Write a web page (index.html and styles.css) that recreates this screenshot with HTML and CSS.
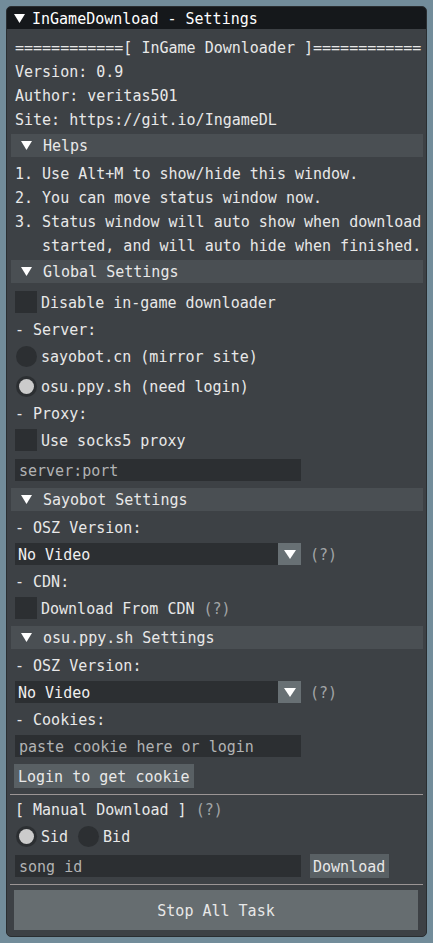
FILE: index.html
```html
<!DOCTYPE html>
<html>
<head>
<meta charset="utf-8">
<link rel="stylesheet" href="styles.css">
</head>
<body>
<div class="win">
  <div class="title">
    <svg class="tri-title" width="11" height="9" viewBox="0 0 11 9"><path d="M0 0H11L5.5 9Z" fill="#ffffff"/></svg>
    <span class="title-text">InGameDownload - Settings</span>
  </div>
  <div class="content">
    <div class="t">============[ InGame Downloader ]============</div>
    <div class="t">Version: 0.9</div>
    <div class="t">Author: veritas501</div>
    <div class="t">Site: https://git.io/IngameDL</div>

    <div class="hdr"><svg class="tri" width="11" height="9" viewBox="0 0 11 9"><path d="M0 0H11L5.5 9Z" fill="#ffffff"/></svg><span>Helps</span></div>
    <div class="t">1. Use Alt+M to show/hide this window.</div>
    <div class="t">2. You can move status window now.</div>
    <div class="t">3. Status window will auto show when download</div>
    <div class="t">   started, and will auto hide when finished.</div>

    <div class="hdr"><svg class="tri" width="11" height="9" viewBox="0 0 11 9"><path d="M0 0H11L5.5 9Z" fill="#ffffff"/></svg><span>Global Settings</span></div>
    <div class="row"><div class="box"></div><span class="lbl">Disable in-game downloader</span></div>
    <div class="t">- Server:</div>
    <div class="row"><div class="radio"></div><span class="lbl">sayobot.cn (mirror site)</span></div>
    <div class="row"><div class="radio on"></div><span class="lbl">osu.ppy.sh (need login)</span></div>
    <div class="t">- Proxy:</div>
    <div class="row"><div class="box"></div><span class="lbl">Use socks5 proxy</span></div>
    <div class="row"><div class="inp">server:port</div></div>

    <div class="hdr"><svg class="tri" width="11" height="9" viewBox="0 0 11 9"><path d="M0 0H11L5.5 9Z" fill="#ffffff"/></svg><span>Sayobot Settings</span></div>
    <div class="t">- OSZ Version:</div>
    <div class="row">
      <div class="combo"><span class="combo-val">No Video</span><span class="combo-btn"><svg width="12" height="9" viewBox="0 0 12 9"><path d="M0 0H12L6 9Z" fill="#ffffff"/></svg></span></div>
      <span class="help gapped">(?)</span>
    </div>
    <div class="t">- CDN:</div>
    <div class="row"><div class="box"></div><span class="lbl">Download From CDN <span class="help">(?)</span></span></div>

    <div class="hdr"><svg class="tri" width="11" height="9" viewBox="0 0 11 9"><path d="M0 0H11L5.5 9Z" fill="#ffffff"/></svg><span>osu.ppy.sh Settings</span></div>
    <div class="t">- OSZ Version:</div>
    <div class="row">
      <div class="combo"><span class="combo-val">No Video</span><span class="combo-btn"><svg width="12" height="9" viewBox="0 0 12 9"><path d="M0 0H12L6 9Z" fill="#ffffff"/></svg></span></div>
      <span class="help gapped">(?)</span>
    </div>
    <div class="t">- Cookies:</div>
    <div class="row"><div class="inp">paste cookie here or login</div></div>
    <div class="row"><div class="btn">Login to get cookie</div></div>

    <div class="sep"></div>
    <div class="t">[ Manual Download ] <span class="help">(?)</span></div>
    <div class="row">
      <div class="radio on"></div><span class="lbl">Sid</span>
      <div class="radio second"></div><span class="lbl">Bid</span>
    </div>
    <div class="row"><div class="inp">song id</div><div class="btn dl">Download</div></div>
    <div class="sep"></div>
    <div class="stop">Stop All Task</div>
  </div>
</div>
</body>
</html>
```

FILE: styles.css
```css
html, body {
  margin: 0;
  padding: 0;
}
body {
  background: #728c9a;
  font-family: "DejaVu Sans Mono", "Liberation Mono", monospace;
  font-size: 15px;
  color: #e8e8e8;
  width: 433px;
  height: 943px;
  overflow: hidden;
}
.win {
  margin: 6px 0 0 6px;
  width: 421px;
  box-sizing: border-box;
  border: 1px solid #2a2e31;
  border-radius: 5px;
  background: #3d4145;
  overflow: hidden;
}
.title {
  height: 22px;
  background: #15181b;
  display: flex;
  align-items: flex-start;
  color: #ffffff;
}
.tri-title {
  margin: 7px 0 0 7px;
  flex: none;
}
.title-text {
  margin-left: 7px;
  line-height: 24px;
  white-space: pre;
}
.content {
  padding: 10px 9px 7px 8px;
  display: flex;
  flex-direction: column;
  gap: 8px;
}
.t {
  height: 16px;
  line-height: 18px;
  white-space: pre;
}
.hdr {
  height: 23px;
  margin: -1px -6px 0 -4px;
  background: #4a4f53;
  display: flex;
  align-items: flex-start;
  white-space: pre;
}
.hdr span {
  line-height: 25px;
}
.hdr .tri {
  margin: 7px 11px 0 10px;
  flex: none;
}
.row {
  height: 22px;
  display: flex;
  align-items: flex-start;
  white-space: pre;
}
.box {
  width: 22px;
  height: 22px;
  background: #2c2f32;
  flex: none;
}
.lbl {
  margin-left: 4px;
  line-height: 24px;
}
.radio {
  width: 21px;
  height: 21px;
  margin: 0.5px 0 0 1px;
  border-radius: 50%;
  background: #2c2f32;
  flex: none;
  position: relative;
}
.radio.on::after {
  content: "";
  position: absolute;
  left: 3px;
  top: 3px;
  width: 15px;
  height: 15px;
  border-radius: 50%;
  background: #cbcbcb;
}
.radio.second {
  margin-left: 10px;
}
.inp {
  width: 282px;
  height: 22px;
  padding-left: 4px;
  line-height: 24px;
  background: #2c2f32;
  color: #b2b3b4;
  flex: none;
  overflow: hidden;
}
.combo {
  width: 286px;
  height: 22px;
  display: flex;
  background: #2c2f32;
  flex: none;
}
.combo-val {
  flex: 1;
  padding-left: 3px;
  line-height: 24px;
  color: #f0f0f0;
}
.combo-btn {
  width: 23px;
  height: 22px;
  background: #687074;
  display: flex;
  align-items: center;
  justify-content: center;
}
.help {
  color: #a2a5a7;
}
.help.gapped {
  margin-left: 9px;
  line-height: 24px;
}
.btn {
  height: 22px;
  line-height: 24px;
  padding: 0 3px;
  background: #596064;
  box-shadow: 0 0 0 1px #596064;
  flex: none;
  overflow: hidden;
}
.btn.dl {
  margin-left: 10px;
  padding: 0 3px 0 2px;
}
.sep {
  height: 1px;
  background: #9b9595;
  margin: -1px -6px -2px -5px;
}
.stop {
  height: 38px;
  line-height: 40px;
  text-align: center;
  background: #666d70;
  box-shadow: 0 0 0 1px #666d70;
  white-space: pre;
  overflow: hidden;
}
```
